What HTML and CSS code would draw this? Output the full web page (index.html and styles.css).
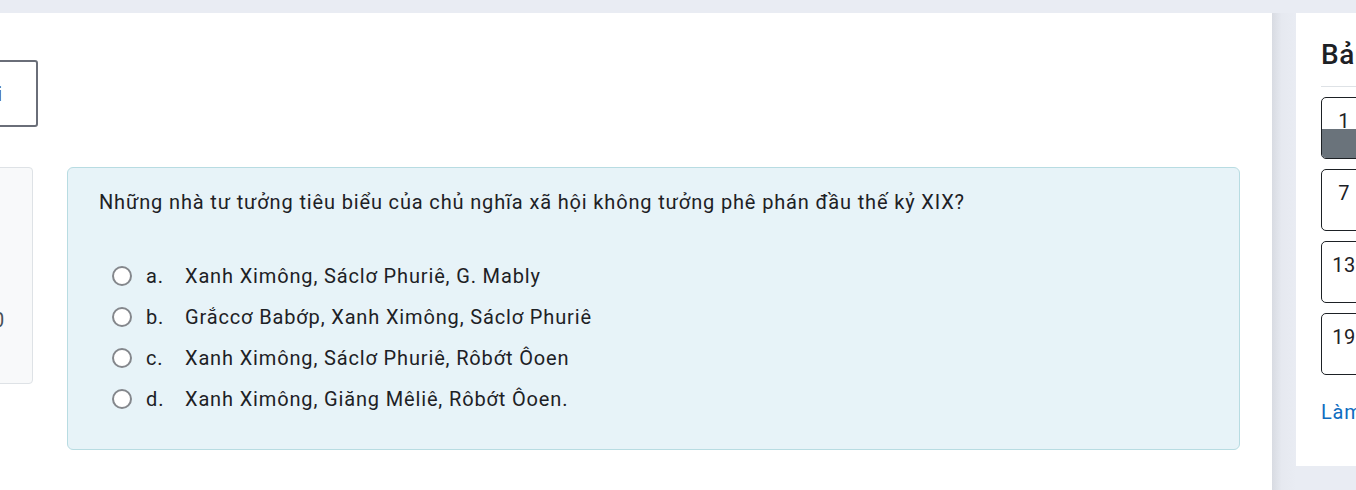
FILE: index.html
```html
<!DOCTYPE html>
<html lang="vi">
<head>
<meta charset="utf-8">
<title>Quiz</title>
<link rel="stylesheet" href="styles.css">
</head>
<body>
<div class="page">
  <main class="main">
    <div class="main-inner">
      <div class="toolbar">
        <button class="btn-outline" type="button">Bắt đầu lại</button>
      </div>
      <div class="que">
        <div class="info">
          <div class="info-line">Câu hỏi 1</div>
          <div class="info-line">Chưa trả lời</div>
          <div class="info-line info-grade">Đạt điểm 1,00</div>
        </div>
        <div class="formulation">
          <div class="qtext">Những nhà tư tưởng tiêu biểu của chủ nghĩa xã hội không tưởng phê phán đầu thế kỷ XIX?</div>
          <div class="answers">
            <label class="answer"><span class="radio"></span><span class="letter">a.</span><span class="atext">Xanh Ximông, Sáclơ Phuriê, G. Mably</span></label>
            <label class="answer"><span class="radio"></span><span class="letter">b.</span><span class="atext">Grắccơ Babớp, Xanh Ximông, Sáclơ Phuriê</span></label>
            <label class="answer"><span class="radio"></span><span class="letter">c.</span><span class="atext">Xanh Ximông, Sáclơ Phuriê, Rôbớt Ôoen</span></label>
            <label class="answer"><span class="radio"></span><span class="letter">d.</span><span class="atext">Xanh Ximông, Giăng Mêliê, Rôbớt Ôoen.</span></label>
          </div>
        </div>
      </div>
    </div>
  </main>
  <div class="gutter"></div>
  <aside class="drawer">
    <h2 class="drawer-title">Bảng câu hỏi</h2>
    <div class="nav-grid">
      <div class="qbtn answered"><span class="qnum">1</span><span class="qstate"></span></div>
      <div class="qbtn"><span class="qnum">7</span><span class="qstate"></span></div>
      <div class="qbtn"><span class="qnum">13</span><span class="qstate"></span></div>
      <div class="qbtn"><span class="qnum">19</span><span class="qstate"></span></div>
    </div>
    <a class="drawer-link" href="#">Làm xong...</a>
  </aside>
</div>
</body>
</html>
```

FILE: styles.css
```css
html, body {
  margin: 0;
  padding: 0;
  overflow: hidden;
  background: #e9ecf3;
  font-family: Roboto, "Noto Sans", sans-serif;
  color: #1d2125;
}
.page {
  display: flex;
  padding-top: 13px;
  height: 477px;
  width: 1600px;
}
.main {
  flex: 0 0 1272px;
  height: 477px;
  background: #fff;
  overflow: hidden;
}
.main-inner {
  margin-left: -200px;
  padding-top: 47px;
}
.toolbar {
  display: flex;
  height: 67px;
}
.btn-outline {
  box-sizing: border-box;
  width: 238px;
  height: 67px;
  border: 2px solid #6a6e78;
  border-radius: 3px;
  background: #fff;
  color: #3f444c;
  font: 20px Roboto, sans-serif;
  letter-spacing: 0.85px;
  text-align: right;
  padding: 0 33px 0 0;
}
.que {
  display: flex;
  gap: 34px;
  margin-top: 40px;
  align-items: flex-start;
}
.info {
  box-sizing: border-box;
  flex: 0 0 233px;
  height: 217px;
  background: #f8f9fa;
  border: 1px solid #dee2e6;
  border-radius: 4px;
  padding: 16px 27px 0 16px;
  color: #f8f9fa;
  font-size: 20px;
  letter-spacing: 0.85px;
}
.info-line {
  height: 30px;
  line-height: 30px;
}
.info-grade {
  margin-top: 61px;
  text-align: right;
  color: #495057;
}
.formulation {
  box-sizing: border-box;
  flex: 0 0 1173px;
  height: 283px;
  background: #e7f3f8;
  border: 1px solid #b8dce2;
  border-radius: 6px;
  padding: 19px 31px 0;
}
.qtext {
  font-size: 20px;
  line-height: 30px;
  letter-spacing: 0.85px;
  color: #1d2125;
}
.answers {
  margin-top: 38px;
  display: flex;
  flex-direction: column;
}
.answer {
  display: flex;
  align-items: center;
  height: 41px;
  font-size: 20px;
  letter-spacing: 0.85px;
  color: #1d2125;
}
.radio {
  box-sizing: border-box;
  width: 20px;
  height: 20px;
  border: 2px solid #84878c;
  border-radius: 50%;
  background: #fff;
  margin-left: 13px;
}
.letter {
  margin-left: 14px;
  width: 39px;
}
.gutter {
  flex: 0 0 24px;
  background: linear-gradient(to right, #d8dbe2, #e6e9f0 40%, #e9ecf3);
}
.drawer {
  flex: 0 0 240px;
  box-sizing: border-box;
  height: 453px;
  background: #fff;
  padding: 22px 0 0 25px;
}
.drawer-title {
  margin: 0;
  font-size: 28px;
  font-weight: 500;
  line-height: 40px;
  letter-spacing: 0.5px;
  color: #1d2125;
  white-space: nowrap;
  padding-bottom: 11px;
  border-bottom: 1px solid #dee2e6;
}
.nav-grid {
  display: flex;
  flex-direction: column;
  gap: 10px;
  margin-top: 10px;
}
.qbtn {
  box-sizing: border-box;
  width: 46px;
  height: 62px;
  border: 1px solid #1d2125;
  border-radius: 5px;
  display: flex;
  flex-direction: column;
  overflow: hidden;
  background: #fff;
}
.qnum {
  box-sizing: border-box;
  height: 31px;
  padding-top: 8px;
  line-height: 30px;
  text-align: center;
  font-size: 20px;
  letter-spacing: 0.5px;
  color: #1d2125;
}
.qstate {
  flex: 1;
}
.qbtn.answered .qstate {
  background: #6a737b;
}
.drawer-link {
  display: block;
  margin-top: 25px;
  color: #0f6cbf;
  font-size: 20px;
  letter-spacing: 0.85px;
  text-decoration: none;
  white-space: nowrap;
}
```
